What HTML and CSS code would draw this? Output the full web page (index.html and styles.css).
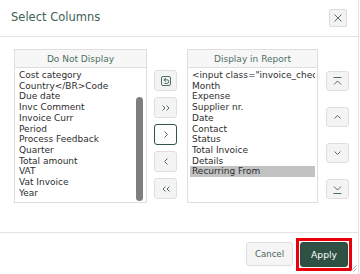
FILE: index.html
```html
<!DOCTYPE html>
<html lang="en">
<head>
    <meta charset="UTF-8">
    <meta name="viewport" content="width=device-width, initial-scale=1.0">
    <title>Select Columns</title>
    <link rel="stylesheet" href="styles.css">
</head>
<body>
    <div class="dialog">
        <div class="dialog-head">
            <h1>Select Columns</h1>
            <button class="close" title="Close">
                <svg width="8" height="8" viewBox="0 0 8 8"><path d="M0.5 0.5 L7.5 7.5 M7.5 0.5 L0.5 7.5" stroke="#5d7169" stroke-width="1" fill="none"/></svg>
            </button>
        </div>

        <div class="dialog-body">
            <div class="panel panel-left">
                <div class="panel-title">Do Not Display</div>
                <div class="panel-list">
                    <ul class="options">
                        <li>Cost category</li>
                        <li>Country&lt;/BR&gt;Code</li>
                        <li>Due date</li>
                        <li>Invc Comment</li>
                        <li>Invoice Curr</li>
                        <li>Period</li>
                        <li>Process Feedback</li>
                        <li>Quarter</li>
                        <li>Total amount</li>
                        <li>VAT</li>
                        <li>Vat Invoice</li>
                        <li>Year</li>
                    </ul>
                    <div class="scroll"><div class="thumb"></div></div>
                </div>
            </div>

            <div class="move-btns">
                <button class="icon-btn">
                    <svg width="12" height="12" viewBox="0 0 12 12"><rect x="1.5" y="1.5" width="9" height="9" rx="1.5" stroke="#4d6f63" fill="none"/><path d="M6 3 L3.8 4.8 L6 6.6 M4 4.8 H7 a1.8 1.8 0 0 1 0 3.6 H4.5" stroke="#4d6f63" fill="none"/></svg>
                </button>
                <button class="icon-btn">
                    <svg width="8" height="6" viewBox="0 0 8 6"><path d="M0.5 0.5 L3 3 L0.5 5.5 M4.5 0.5 L7 3 L4.5 5.5" stroke="#4d6f63" fill="none"/></svg>
                </button>
                <button class="icon-btn focused">
                    <svg width="4" height="7" viewBox="0 0 4 7"><path d="M0.5 0.5 L3.5 3.5 L0.5 6.5" stroke="#4d6f63" fill="none"/></svg>
                </button>
                <button class="icon-btn">
                    <svg width="4" height="7" viewBox="0 0 4 7"><path d="M3.5 0.5 L0.5 3.5 L3.5 6.5" stroke="#4d6f63" fill="none"/></svg>
                </button>
                <button class="icon-btn">
                    <svg width="8" height="6" viewBox="0 0 8 6"><path d="M3.5 0.5 L1 3 L3.5 5.5 M7.5 0.5 L5 3 L7.5 5.5" stroke="#4d6f63" fill="none"/></svg>
                </button>
            </div>

            <div class="panel panel-right">
                <div class="panel-title">Display in Report</div>
                <div class="panel-list">
                    <ul class="options">
                        <li>&lt;input class="invoice_check"</li>
                        <li>Month</li>
                        <li>Expense</li>
                        <li>Supplier nr.</li>
                        <li>Date</li>
                        <li>Contact</li>
                        <li>Status</li>
                        <li>Total Invoice</li>
                        <li>Details</li>
                        <li class="selected">Recurring From</li>
                    </ul>
                </div>
            </div>

            <div class="order-btns">
                <button class="icon-btn">
                    <svg width="9" height="9" viewBox="0 0 9 9"><path d="M0.5 0.5 H8.5 M1 7.5 L4.5 4 L8 7.5" stroke="#4d6f63" fill="none"/></svg>
                </button>
                <button class="icon-btn">
                    <svg width="7" height="4" viewBox="0 0 7 4"><path d="M0.5 3.5 L3.5 0.5 L6.5 3.5" stroke="#4d6f63" fill="none"/></svg>
                </button>
                <button class="icon-btn">
                    <svg width="7" height="4" viewBox="0 0 7 4"><path d="M0.5 0.5 L3.5 3.5 L6.5 0.5" stroke="#4d6f63" fill="none"/></svg>
                </button>
                <button class="icon-btn">
                    <svg width="9" height="9" viewBox="0 0 9 9"><path d="M1 1.5 L4.5 5 L8 1.5 M0.5 8.5 H8.5" stroke="#4d6f63" fill="none"/></svg>
                </button>
            </div>
        </div>

        <div class="dialog-foot">
            <button class="btn">Cancel</button>
            <span class="highlight"><button class="btn btn-primary">Apply</button></span>
        </div>

        <svg class="resize" width="7" height="7" viewBox="0 0 7 7"><path d="M6.5 0.5 L0.5 6.5 M6.5 3.5 L3.5 6.5" stroke="#b5b5b5" fill="none"/></svg>
    </div>
</body>
</html>
```

FILE: styles.css
```css
body {
    margin: 0;
    padding: 0;
    background: #fff;
    font-family: "DejaVu Sans", Verdana, sans-serif;
    color: #333;
}
button {
    font-family: inherit;
    cursor: pointer;
}
.dialog {
    position: relative;
    width: 359px;
    height: 274px;
    box-sizing: border-box;
    border-right: 1px solid #e2e2e2;
    display: flex;
    flex-direction: column;
}
.dialog-head {
    height: 36px;
    border-bottom: 1px solid #e3e3e3;
    display: flex;
    align-items: center;
    justify-content: space-between;
    padding: 0 11px 0 11px;
}
.dialog-head h1 {
    margin: 0;
    font-size: 11.5px;
    font-weight: normal;
    color: #3f6155;
    padding-bottom: 2px;
}
.close {
    width: 18px;
    height: 18px;
    padding: 0;
    border: 1px solid #dcdcdc;
    border-radius: 2px;
    background: #f3f3f3;
    display: flex;
    align-items: center;
    justify-content: center;
}
.dialog-body {
    height: 195px;
    box-sizing: border-box;
    padding: 12px 0 0 14px;
    display: flex;
    align-items: flex-start;
}
.panel {
    height: 154px;
    box-sizing: border-box;
    border: 1px solid #dedede;
    display: flex;
    flex-direction: column;
}
.panel-left { width: 133px; }
.panel-right { width: 131px; margin-left: 10px; }
.panel-title {
    height: 17px;
    border-bottom: 1px solid #dedede;
    background: #f7f7f7;
    color: #4d6f63;
    font-size: 9px;
    display: flex;
    align-items: center;
    justify-content: center;
}
.panel-list {
    flex: 1;
    display: flex;
    overflow: hidden;
}
.options {
    list-style: none;
    margin: 0;
    padding: 2px 2px 0 2px;
    flex: 1;
    min-width: 0;
    font-size: 9px;
    line-height: 10.7px;
    color: #2e2e2e;
}
.options li {
    padding: 0 2px;
    white-space: nowrap;
    overflow: hidden;
}
.options li.selected {
    background: #c2c2c2;
}
.scroll {
    width: 10px;
    flex: none;
}
.thumb {
    width: 7px;
    height: 104px;
    margin-top: 29px;
    border-radius: 3.5px;
    background: #7e7e7e;
}
.move-btns {
    margin-left: 7px;
    padding-top: 21px;
    display: flex;
    flex-direction: column;
    gap: 6px;
}
.move-btns .icon-btn { height: 21px; }
.order-btns {
    margin-left: 8px;
    padding-top: 22px;
    display: flex;
    flex-direction: column;
    gap: 16px;
}
.order-btns .icon-btn { height: 20px; }
.icon-btn {
    width: 23px;
    padding: 0;
    border: 1px solid #dfdfdf;
    border-radius: 3px;
    background: #f4f4f4;
    display: flex;
    align-items: center;
    justify-content: center;
}
.icon-btn.focused {
    border-color: #2f5546;
    background: #fdfdfd;
}
.dialog-foot {
    flex: 1;
    border-top: 1px solid #e3e3e3;
    display: flex;
    justify-content: flex-end;
    align-items: flex-start;
    padding: 5px 6px 0 0;
    gap: 3px;
}
.btn {
    height: 24px;
    margin-top: 4px;
    padding: 0 8px;
    border: 1px solid #dedede;
    border-radius: 3px;
    background: #f5f5f5;
    color: #4d6259;
    font-size: 8.6px;
}
.highlight {
    display: flex;
    padding: 1px;
    border: 3px solid #e8000b;
}
.btn-primary {
    height: 25px;
    margin-top: 0;
    padding: 0 10px;
    border-color: #2b4b3e;
    background: #2e5143;
    color: #fff;
    font-size: 9.2px;
}
.resize {
    position: absolute;
    right: 1px;
    bottom: 2px;
}
```
